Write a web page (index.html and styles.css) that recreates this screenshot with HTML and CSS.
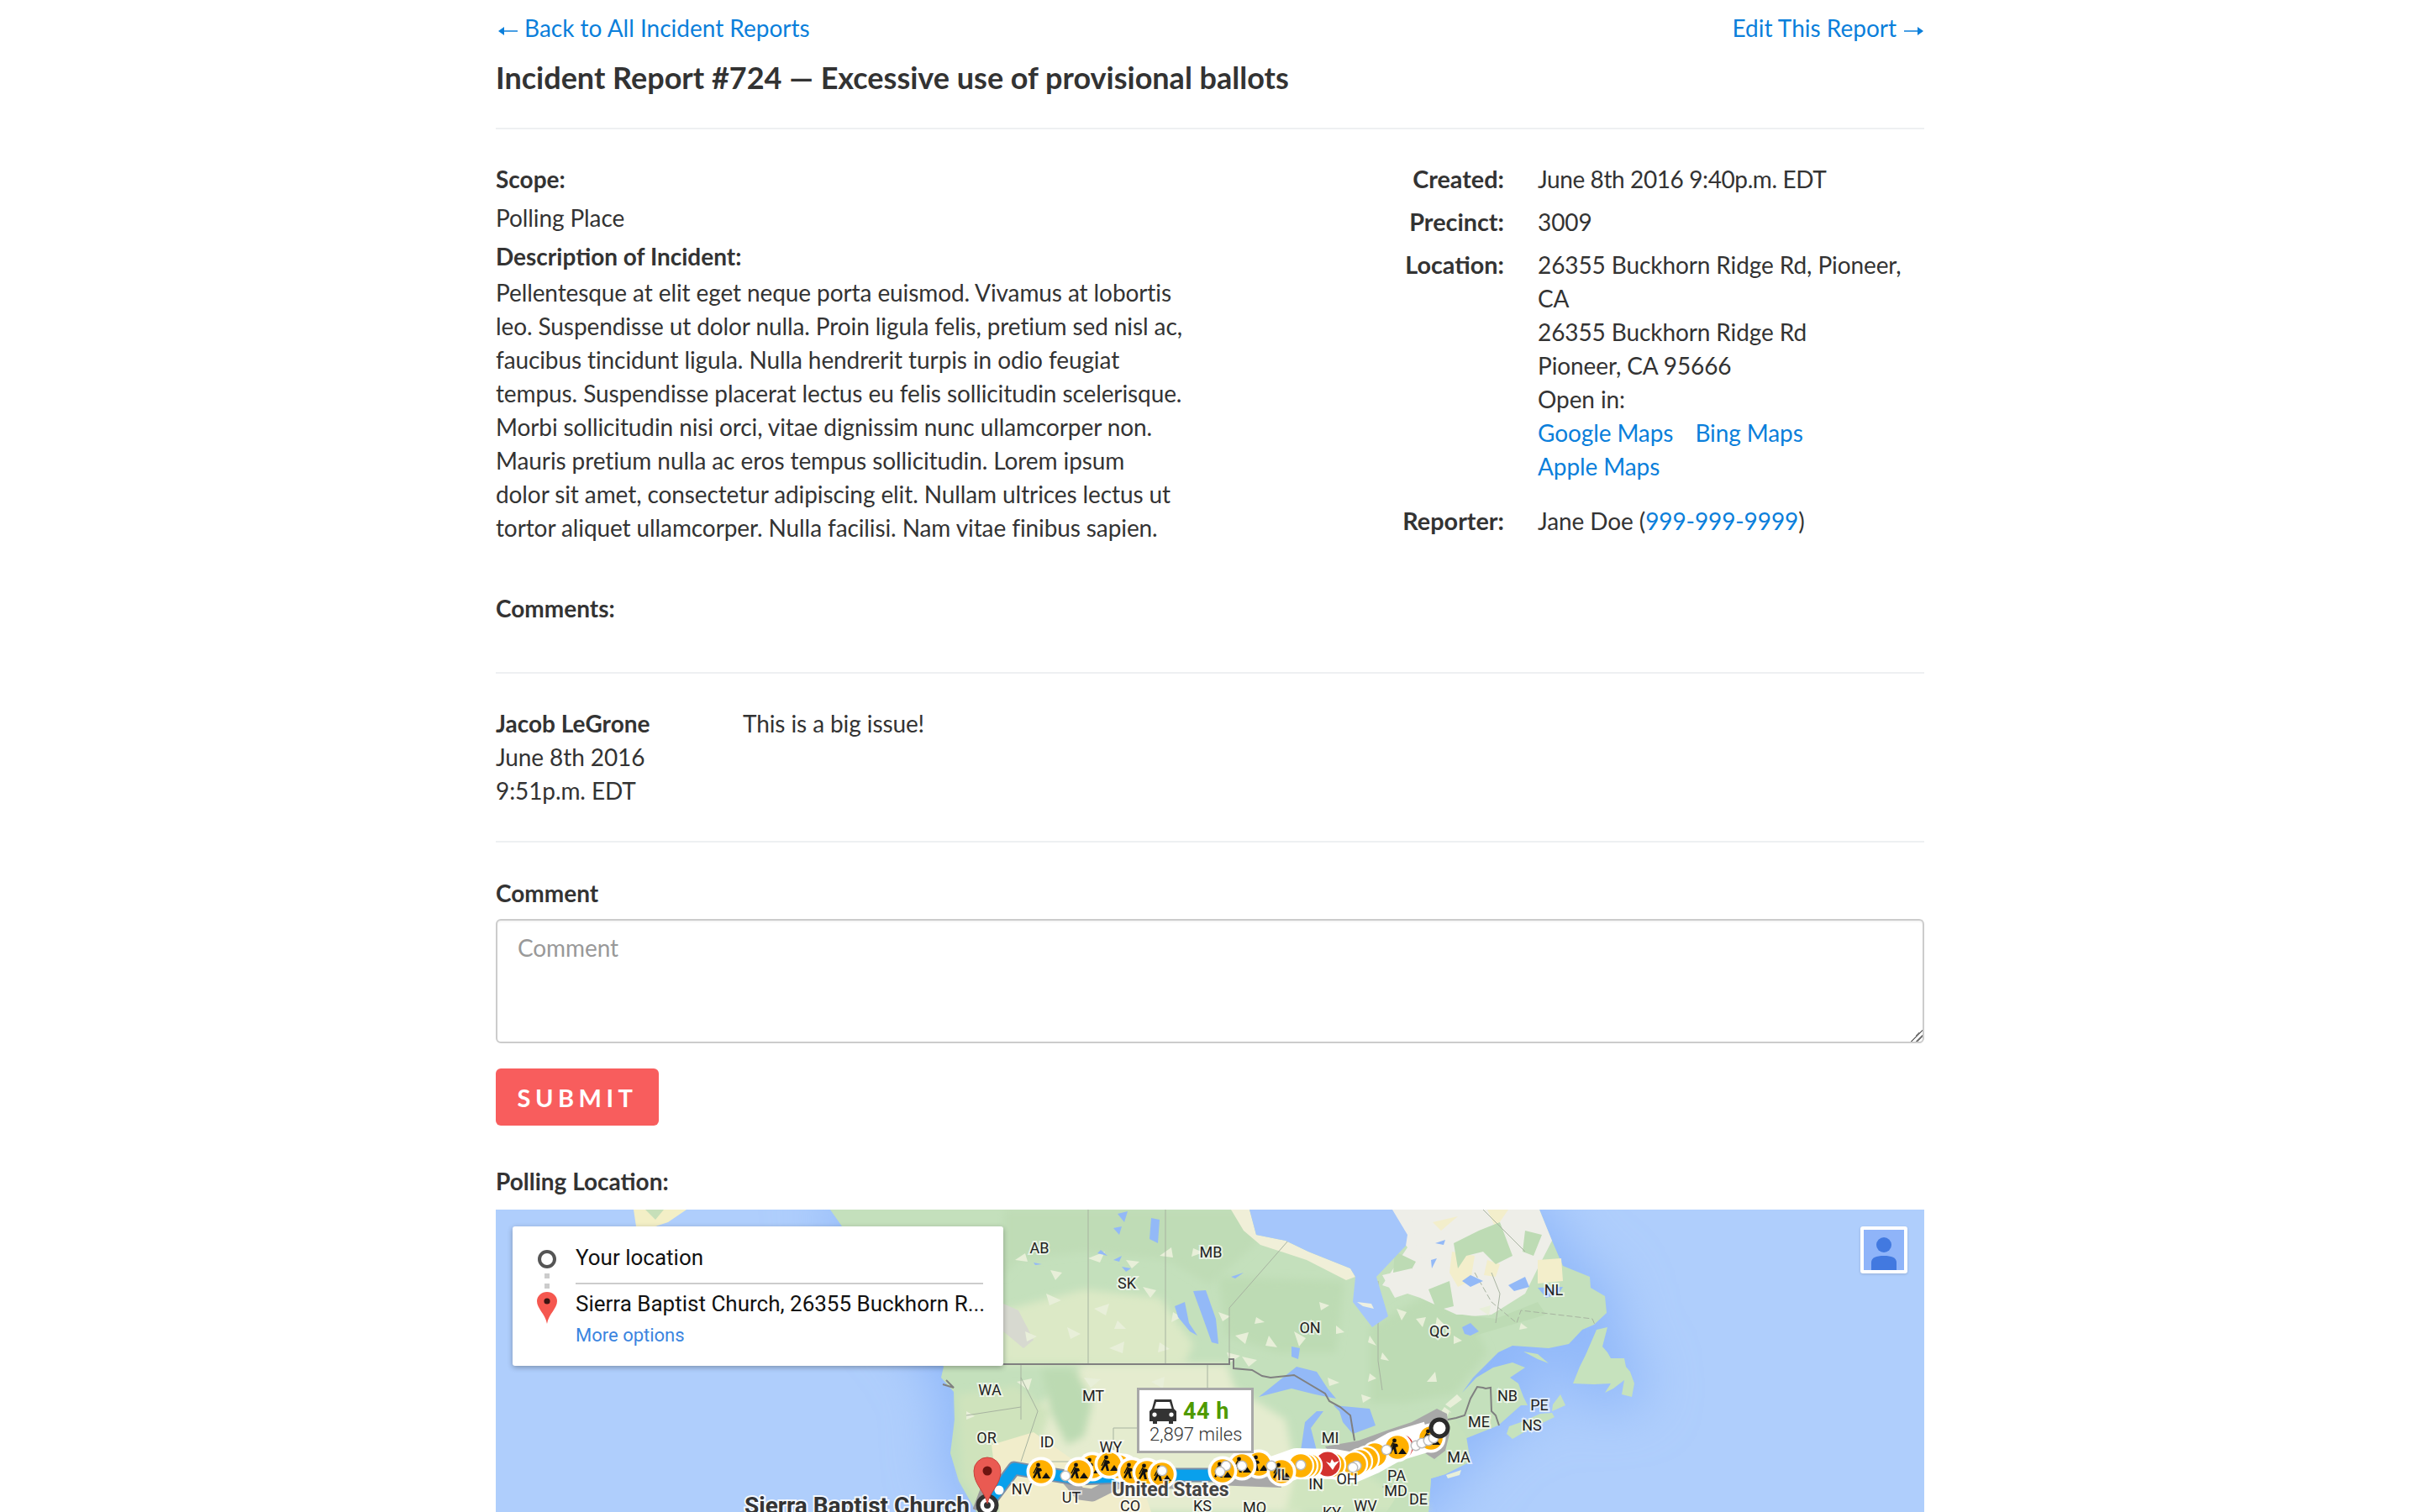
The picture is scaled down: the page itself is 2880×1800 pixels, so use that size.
FILE: index.html
```html
<!DOCTYPE html>
<html lang="en">
<head>
<meta charset="utf-8">
<title>Incident Report #724</title>
<link rel="stylesheet" href="styles.css">
</head>
<body>
<main class="page">
  <nav class="top-links">
    <a href="#"><svg class="arrow arrow-left" viewBox="0 0 23 12" width="23" height="12"><path d="M23 5.200H7V1L0 6L7 11V6.800H23Z" fill="#0b7fdb"/></svg>Back to All Incident Reports</a>
    <a href="#">Edit This Report<svg class="arrow arrow-right" viewBox="0 0 23 12" width="23" height="12"><path d="M0 5.200H16V1L23 6L16 11V6.800H0Z" fill="#0b7fdb"/></svg></a>
  </nav>
  <h1 class="title">Incident Report #724 — Excessive use of provisional ballots</h1>
  <hr class="rule rule-head">

  <section class="report">
    <div class="report-main">
      <h2 class="label">Scope:</h2>
      <p class="scope">Polling Place</p>
      <h2 class="label">Description of Incident:</h2>
      <p class="description">Pellentesque at elit eget neque porta euismod. Vivamus at lobortis leo. Suspendisse ut dolor nulla. Proin ligula felis, pretium sed nisl ac, faucibus tincidunt ligula. Nulla hendrerit turpis in odio feugiat tempus. Suspendisse placerat lectus eu felis sollicitudin scelerisque. Morbi sollicitudin nisi orci, vitae dignissim nunc ullamcorper non. Mauris pretium nulla ac eros tempus sollicitudin. Lorem ipsum dolor sit amet, consectetur adipiscing elit. Nullam ultrices lectus ut tortor aliquet ullamcorper. Nulla facilisi. Nam vitae finibus sapien.</p>
    </div>
    <dl class="facts">
      <dt>Created:</dt>
      <dd class="tight">June 8th 2016 9:40p.m. EDT</dd>
      <dt>Precinct:</dt>
      <dd>3009</dd>
      <dt>Location:</dt>
      <dd class="location">
        26355 Buckhorn Ridge Rd, Pioneer, CA<br>
        26355 Buckhorn Ridge Rd<br>
        Pioneer, CA 95666<br>
        Open in:<br>
        <a href="#" class="map-link">Google Maps</a> <a href="#" class="map-link">Bing Maps</a> <a href="#" class="map-link">Apple Maps</a>
      </dd>
      <dt>Reporter:</dt>
      <dd>Jane Doe (<a href="#">999-999-9999</a>)</dd>
    </dl>
  </section>

  <h2 class="label comments-title">Comments:</h2>
  <hr class="rule">
  <article class="comment">
    <div class="comment-meta"><strong>Jacob LeGrone</strong><br>June 8th 2016<br>9:51p.m. EDT</div>
    <p class="comment-body">This is a big issue!</p>
  </article>
  <hr class="rule">

  <form class="comment-form">
    <label class="label" for="comment">Comment</label>
    <textarea id="comment" class="comment-input" placeholder="Comment"></textarea>
    <button type="button" class="submit">SUBMIT</button>
  </form>

  <h2 class="label polling-title">Polling Location:</h2>
  <div class="map">
    <svg class="map-art" viewBox="0 0 1700 360" width="1700" height="360" xmlns="http://www.w3.org/2000/svg">
      <defs>
        <filter id="coastblur" x="-20%" y="-20%" width="140%" height="140%"><feGaussianBlur stdDeviation="32"/></filter>
        <filter id="soft" x="-10%" y="-10%" width="120%" height="120%"><feGaussianBlur stdDeviation="5"/></filter>
        <path id="landshape" d="M398 0L440 60L480 120L533 187L530 200L545 217L546 250L541 290L551 323L572 360L1110 360L1113 320L1130 315L1157 300L1153 273L1193 257L1220 233L1228 233L1223 223L1217 207L1207 200L1225 188L1210 182L1187 188L1167 200L1150 218L1163 200L1193 170L1210 162L1253 165L1277 160L1293 143L1307 137L1322 123L1320 103L1303 93L1302 80L1270 67L1257 37L1242 0Z"/>
        <path id="nfld" d="M1282 207L1290 187L1297 173L1310 143L1323 140L1317 163L1323 170L1327 177L1343 177L1345 187L1350 193L1355 207L1352 223L1340 220L1343 203L1330 213L1320 218L1327 207L1307 208Z"/>
        <path id="ns" d="M1203 267L1210 273L1227 263L1260 247L1257 242L1243 243L1223 252L1206 258ZM1257 240L1273 233L1267 220L1258 232ZM1223 169L1240 172L1253 183L1240 178Z"/>
        <g id="worker">
          <circle cx="-3.500" cy="-8" r="2.400" fill="#111"/>
          <path d="M-5-5L0-4L1-1L-2 0L0 8L-3 8L-4.500 2L-8 8L-10 7L-6.500 0Z" fill="#111"/>
          <path d="M-9 2L-5-6" stroke="#111" stroke-width="1.400"/>
          <path d="M1 8L6 1L11 8Z" fill="#111"/>
        </g>
        <g id="marker">
          <circle r="17.500" fill="#fff"/>
          <circle r="13.800" fill="#ffb000"/>
          <use href="#worker"/>
        </g>
        <g id="ring">
          <circle r="16.200" fill="#fff"/>
          <circle r="13.800" fill="#ffb000"/>
        </g>
        <g id="dot">
          <circle r="6.500" fill="#bbb"/>
          <circle r="5" fill="#fff"/>
        </g>
      </defs>

      <rect width="1700" height="360" fill="#afcefc"/>
      <g filter="url(#coastblur)" fill="#8fb7f9" stroke="#8fb7f9" stroke-width="24">
        <use href="#landshape"/>
        <use href="#nfld"/>
      </g>

      <path d="M164 0L227 0L205 15L190 20L167 20Z" fill="#f3efc6"/>
      <path d="M178 0L200 0L190 12Z" fill="#c6dfb9"/>
      <use href="#landshape" fill="#c4e0bc"/>
      <use href="#nfld" fill="#c6e2bd"/>
      <use href="#ns" fill="#c6e2bd"/>

      <!-- prairie and plains -->
      <path d="M604 120L700 95L790 105L830 160L820 184L604 184Z" fill="#dce9c6" filter="url(#soft)"/>
      <path d="M700 184L870 184L880 215L900 225L940 250L950 300L960 360L590 360L600 300L640 240Z" fill="#e5eccf" filter="url(#soft)"/>
      <path d="M550 220L620 210L660 240L640 300L680 360L580 360L555 320Z" fill="#cfe3bc" filter="url(#soft)"/>
      <path d="M590 280L640 265L690 300L760 300L780 360L600 360Z" fill="#f1edcb"/>
      <path d="M650 190L690 190L710 230L700 270L680 280L660 240Z" fill="#bcdab2" filter="url(#soft)"/>
      <path d="M1000 290L1060 330L1090 320L1110 360L940 360L950 320Z" fill="#d0e5bf" filter="url(#soft)"/>
      <path d="M604 0L900 0L905 40L850 90L800 60L700 50L620 60L604 80Z" fill="#bfdcb6" filter="url(#soft)"/>
      <path d="M860 80L1010 85L1000 170L930 170L870 150Z" fill="#bddbb4" filter="url(#soft)"/>
      <path d="M1040 140L1110 100L1160 130L1180 170L1140 220L1080 230L1040 230Z" fill="#bddbb4" filter="url(#soft)"/>
      <!-- Quebec and Labrador -->
      <path d="M1050 0L1242 0L1257 37L1240 70L1225 100L1185 125L1150 128L1100 105L1055 90L1085 45Z" fill="#eeeee8"/>
      <path d="M1138 50L1165 55L1160 85L1145 92L1135 75ZM1180 60L1195 65L1190 80L1176 78ZM1240 60L1268 58L1270 85L1240 88ZM1115 15L1145 8L1125 25ZM1180 0L1205 0L1190 22Z" fill="#f3eecb"/>
      <path d="M1140 40L1170 25L1195 15L1210 55L1190 65L1175 50L1155 55L1145 70ZM1105 125L1150 125L1190 130L1240 110L1250 125L1165 150L1120 150ZM1225 25L1245 30L1235 55L1222 50ZM1110 95L1135 85L1140 115L1120 120ZM1070 50L1095 62L1085 80L1068 75Z" fill="#bddbb4"/>
      <path d="M875 0L897 0L905 30L940 37L967 50L1017 70L1023 80L1012 84L965 60L910 42L890 25Z" fill="#f0efd8"/>
      <path d="M1055 78L1090 70L1100 95L1070 105Z" fill="#eeeee8"/>
      <path d="M1090 10L1115 0L1115 60L1098 55Z" fill="#eeeee8"/>

      <!-- Rocky mountains -->
      <path d="M604 112L622 120L640 155L628 165L604 145Z" fill="#d7d9d0"/>

      <!-- white flecks -->
      <path fill="#e8efd9" d="M618 60l12-8 3 10zM660 72l14 3-8 9zM705 58l20-8-6 13zM750 60l16 2-9 8zM790 55l14-10 2 12zM830 46l12 5-14 5zM655 100l18 8-14 6zM712 118l18-6-4 14zM770 92l16 4-7 9zM806 122l10 6-12 6zM860 122l14 5-9 6zM905 128l10 6-12 2zM880 150l16-4-4 14zM920 150l10 14-14-2zM950 145l14 8-8 10zM980 110l12 4-10 6zM870 170l16 4-12 8zM888 175l18 4-10 8zM1000 138l10 8-10 2zM1040 150l8 12-10-4zM1072 118l12 4-6 10zM1095 130l12-2-4 12zM1120 128l10 10-12 2zM1040 195l8 6-10 4zM1055 170l8 10-10-2zM1108 205l10-12 2 12zM1140 150l10 6-10 4zM1170 118l14-4-2 12zM1220 135l8 6-10 2zM630 145l14 6-12 6zM680 140l16 8-12 6zM730 165l18-8-2 14zM790 158l12 8-14 4zM740 132l10 10-14 0zM620 205l18-4-4 14zM700 200l20 2-12 10zM780 205l16-6-2 14zM812 240l14-6-4 12zM560 240l10 6-10 4zM990 200l14 6-12 4zM1030 220l12 4-10 6zM1115 255l14-20 8 6-12 18zM1130 232l14-12 6 6-14 10zM1010 300l12 4-10 6zM1060 340l10-8 2 10zM1131 316l18-6-2 6-14 4z"/>

      <!-- state and province lines -->
      <g fill="none" stroke="#a7b3a0" stroke-width="1">
        <path d="M705 0V184M797 0V184"/>
        <path d="M873 117V178M873 117L943 37" />
        <path d="M1050 85V180L1055 215"/>
        <path d="M625 184V250M625 200L645 240L625 300M640 300H790M735 260V300M735 260H900M847 184V260M560 245L625 235"/>
        <path d="M1165 75L1185 110L1215 135L1220 120L1305 130L1308 137" stroke-dasharray="7 3"/>
        <path d="M1185 75L1195 100L1190 135"/>
        <path d="M1175 0L1225 50"/>
        <path d="M1055 330H1110M1130 270V310"/>
      </g>

      <!-- Hudson Bay -->
      <path d="M897 0L905 30L940 37L967 50L1017 70L1023 80L1020 110L1043 140L1062 127L1048 80L1083 43L1085 30L1067 0Z" fill="#a5c6fb"/>
      <path d="M1025 110L1042 112L1045 118L1032 115Z" fill="#eef0e2"/>

      <!-- lakes -->
      <g fill="#93b9f7">
        <path d="M908 223L933 203L953 187L977 193L990 213L1000 225L975 220L947 213Z"/>
        <path d="M977 240L963 253L958 287L977 287L970 260L985 240Z"/>
        <path d="M997 233L1040 237L1047 257L1020 267L1008 253L1004 240Z"/>
        <path d="M830 97L845 96L857 130L860 160L852 158L842 130ZM808 115L820 110L825 135L835 150L826 145L812 128Z"/>
        <path d="M947 163L957 165L955 178L947 175ZM780 10L790 12L788 40L778 35ZM740 5L752 2L748 15ZM735 22L745 20L742 30ZM745 68L756 70L750 74ZM640 63L650 65L642 66ZM735 60L745 55L742 62ZM720 48L728 55L716 52ZM890 75L880 82L875 80ZM1160 78L1175 85L1160 92L1150 85ZM1205 90L1225 80L1230 92L1212 97ZM1150 140L1160 135L1170 145L1160 150L1153 148ZM1240 93L1270 92L1265 100L1250 105Z"/>
        <path d="M1118 40L1130 36L1128 42ZM1113 60L1120 58L1114 70Z"/>
      </g>
      <path d="M1023 290L1090 280L1120 300L1123 270L1135 240L1155 270L1160 300L1130 315L1113 320L1110 360L1060 360L1080 330Z" fill="#c6e1bb"/>

      <!-- country border -->
      <g fill="none" stroke="#808080" stroke-width="2">
        <path d="M600 184H873V178H878V189L900 191L912 198L922 200L950 197L987 219L992 228L1005 235L1017 245L1022 275"/>
        <path d="M536 203L545 212L532 208"/>
        <path d="M1133 250L1143 248L1153 245L1160 225L1168 211L1175 212L1178 213L1184 212L1185 240L1190 245L1194 257"/>
      </g>

      <!-- alternate routes -->
      <path d="M987 282L1027 275L1060 263L1090 253L1120 237L1132 243L1135 267L1130 287L1117 297L1103 288L1060 292L1000 300Z" fill="#a8a8a8"/>
      <path d="M680 320L695 338L710 340L740 325L810 325" fill="none" stroke="#a8a8a8" stroke-width="15" stroke-linejoin="round"/>
      <path d="M855 322L935 325" fill="none" stroke="#a8a8a8" stroke-width="12"/>

      <!-- main route -->
      <path d="M578 360L590 328" fill="none" stroke="#999" stroke-width="22"/>
      <path d="M583 353L617 308L640 312L690 320L800 316L870 316" fill="none" stroke="#7d8ea5" stroke-width="17" stroke-linejoin="round"/>
      <path d="M583 353L617 308L640 312L690 320L800 316L870 316" fill="none" stroke="#09a0ec" stroke-width="13" stroke-linejoin="round"/>
      <path d="M925 312L953 302L997 303L1020 307L1043 297L1070 282L1110 270" fill="none" stroke="#fff" stroke-width="36" stroke-linejoin="round"/>

      <!-- road work markers -->
      <use href="#marker" x="710" y="306"/>
      <use href="#marker" x="694" y="312"/>
      <use href="#marker" x="747" y="308"/>
      <use href="#ring" x="741" y="306"/>
      <use href="#marker" x="730" y="303"/>
      <use href="#marker" x="757" y="312"/>
      <use href="#marker" x="775" y="313"/>
      <use href="#marker" x="793" y="315"/>
      <use href="#marker" x="649" y="312"/>
      <use href="#marker" x="908" y="303"/>
      <use href="#marker" x="888" y="305"/>
      <use href="#marker" x="865" y="311"/>
      <use href="#dot" x="793" y="311"/>
      <use href="#dot" x="869" y="305"/>
      <use href="#dot" x="862" y="312"/>
      <use href="#dot" x="888" y="305"/>

      <use href="#marker" x="1113" y="272"/>
      <circle cx="1078" cy="282" r="14" fill="#d3322f"/>
      <use href="#marker" x="1073" y="283"/>
      <use href="#ring" x="1046" y="292"/>
      <use href="#ring" x="1036" y="297"/>
      <use href="#ring" x="1028" y="300"/>
      <use href="#ring" x="1022" y="303"/>
      <use href="#ring" x="996" y="304"/>
      <circle cx="990" cy="303" r="16.200" fill="#fff"/>
      <circle cx="990" cy="303" r="14.500" fill="#d3322f"/>
      <path d="M988 300l5 2 2-5 3 4 6-2-5 6-3 5-3-4z" fill="#fff"/>
      <use href="#ring" x="968" y="305"/>
      <use href="#ring" x="963" y="305"/>
      <use href="#ring" x="958" y="305"/>
      <use href="#marker" x="935" y="312"/>
      <use href="#dot" x="923" y="305"/>
      <use href="#dot" x="958" y="304"/>
      <use href="#dot" x="1024" y="305"/>
      <use href="#dot" x="1020" y="307"/>
      <use href="#dot" x="1060" y="286"/>
      <use href="#dot" x="1095" y="281"/>
      <use href="#dot" x="1102" y="278"/>
      <use href="#dot" x="1110" y="275"/>
      <use href="#dot" x="1116" y="272"/>
      <use href="#dot" x="678" y="317"/>
      <circle cx="599" cy="334" r="5.500" fill="#fff"/>

      <!-- end points -->
      <circle cx="1123" cy="260" r="10" fill="#fff" stroke="#2b2b2b" stroke-width="5"/>
      <circle cx="585" cy="352" r="11" fill="#fff" stroke="#333" stroke-width="5"/>
      <circle cx="585" cy="352" r="4" fill="#333"/>
      <path d="M585 350C582 335 569 328 569 311A16 16 0 0 1 601 311C601 328 588 335 585 350Z" fill="#ea5a52" stroke="#c8413b" stroke-width="1"/>
      <circle cx="585" cy="311" r="5.500" fill="#6d1410"/>

      <!-- map labels -->
      <g class="map-labels" text-anchor="middle">
        <text x="647" y="52">AB</text><text x="851" y="57">MB</text><text x="751" y="94">SK</text>
        <text x="969" y="147">ON</text><text x="1123" y="151">QC</text><text x="1259" y="102">NL</text>
        <text x="1204" y="228">NB</text><text x="1242" y="239">PE</text><text x="1233" y="263">NS</text>
        <text x="1170" y="259">ME</text><text x="1146" y="301">MA</text><text x="588" y="221">WA</text>
        <text x="711" y="228">MT</text><text x="584" y="278">OR</text><text x="656" y="283">ID</text>
        <text x="732" y="289">WY</text><text x="626" y="339">NV</text><text x="685" y="349">UT</text>
        <text x="755" y="359">CO</text><text x="841" y="359">KS</text><text x="903" y="361">MO</text>
        <text x="993" y="278">MI</text><text x="937" y="322">IL</text><text x="976" y="333">IN</text>
        <text x="1013" y="327">OH</text><text x="1072" y="323">PA</text><text x="1071" y="341">MD</text>
        <text x="1098" y="351">DE</text><text x="1035" y="359">WV</text><text x="995" y="367">KY</text>
      </g>
      <text class="map-country" x="803" y="341" text-anchor="middle">United States</text>
      <text class="map-place" x="430" y="362" text-anchor="middle">Sierra Baptist Church</text>
    </svg>

    <div class="directions">
      <div class="dir-icons">
        <span class="dir-origin"></span>
        <span class="dir-dot"></span>
        <span class="dir-dot"></span>
        <svg class="dir-pin" viewBox="0 0 24 38" width="24" height="38"><path d="M12 38C10 26 0 20 0 11A12 11 0 0 1 24 11C24 20 14 26 12 38Z" fill="#f5574f"/><circle cx="12" cy="11" r="3.600" fill="#3a1512"/></svg>
      </div>
      <div class="dir-text">
        <div class="dir-from">Your location</div>
        <div class="dir-to">Sierra Baptist Church, 26355 Buckhorn R...</div>
        <a href="#" class="dir-more">More options</a>
      </div>
    </div>

    <div class="trip">
      <div class="trip-top">
        <svg class="trip-car" viewBox="0 0 32 29" width="32" height="29"><path d="M6 0H26L29 11L32 14V26H28V29H23V26H9V29H4V26H0V14L3 11ZM8 3L5.500 11H26.500L24 3ZM6 15.500A2.600 2.600 0 1 0 6 20.700A2.600 2.600 0 1 0 6 15.500ZM26 15.500A2.600 2.600 0 1 0 26 20.700A2.600 2.600 0 1 0 26 15.500Z" fill="#333" fill-rule="evenodd"/></svg>
        <span class="trip-time">44 h</span>
      </div>
      <div class="trip-dist">2,897 miles</div>
    </div>

    <div class="pegman">
      <svg viewBox="0 0 48 48" width="48" height="48"><rect width="48" height="48" fill="#8fb4f9"/><ellipse cx="24" cy="18" rx="9" ry="9" fill="#4279e0"/><path d="M9 48V39C9 33 15 31 24 31C33 31 39 33 39 39V48Z" fill="#4279e0"/></svg>
    </div>
  </div>
</main>
</body>
</html>
```

FILE: styles.css
```css
* { box-sizing: border-box; }

html, body {
  margin: 0;
  padding: 0;
  background: #fff;
}

body {
  font-family: Lato, "Liberation Sans", sans-serif;
  font-size: 28px;
  line-height: 40px;
  letter-spacing: -0.1px;
  color: #333;
}

a { color: #0b7fdb; text-decoration: none; }

.page {
  width: 1700px;
  margin: 0 auto;
  padding-top: 13px;
}

.top-links {
  display: flex;
  justify-content: space-between;
  letter-spacing: 0;
}

.arrow { display: inline-block; vertical-align: 1px; }

.arrow-left { margin: 0 8px 0 3px; }

.arrow-right { margin: 0 1px 0 9px; }

.title {
  margin: 14px 0 0;
  font-size: 36px;
  line-height: 50px;
  font-weight: 700;
  letter-spacing: 0;
}

.rule {
  height: 2px;
  margin: 0;
  border: 0;
  background: #eef0f2;
}

.rule-head { margin-top: 35px; }

.report {
  display: flex;
  justify-content: space-between;
  align-items: flex-start;
  margin-top: 39px;
}

.report-main { width: 818px; }

.label {
  display: block;
  margin: 0;
  font-size: 28px;
  line-height: 40px;
  font-weight: 700;
  letter-spacing: 0;
}

.scope { margin: 6px 0 6px; }

.description { margin: 3px 0 0; }

.facts {
  display: grid;
  grid-template-columns: 200px 460px;
  column-gap: 40px;
  row-gap: 11px;
  width: 700px;
  margin: 0;
  flex: none;
}

.facts dt {
  font-size: 28.800px;
  font-weight: 700;
  letter-spacing: 0;
  text-align: right;
}

.facts dd { margin: 0; }

.facts .tight { letter-spacing: -0.4px; }

.location { padding-bottom: 14px; }

.map-link { display: inline-block; margin-right: 19px; }

.comments-title { margin-top: 56px; }

.comments-title + .rule { margin-top: 56px; }

.comment {
  display: grid;
  grid-template-columns: 294px 1fr;
  padding: 39px 0 40px;
}

.comment-meta strong { font-weight: 700; letter-spacing: 0; }

.comment-body { margin: 0; }

.comment-form { margin-top: 40px; }

.comment-input {
  display: block;
  width: 100%;
  height: 148px;
  margin-top: 11px;
  padding: 12px 24px;
  border: 2px solid #ccc;
  border-radius: 6px;
  font: inherit;
  letter-spacing: inherit;
  color: #333;
  box-shadow: inset 0 2px 2px rgba(0, 0, 0, 0.04);
}

.comment-input::placeholder { color: #999; opacity: 1; }

.comment-input::-webkit-resizer {
  background: linear-gradient(135deg, transparent 0 50%, #777 50% 59%, transparent 59% 72%, #777 72% 81%, transparent 81%);
}

.submit {
  display: block;
  width: 194px;
  height: 68px;
  margin-top: 30px;
  padding: 0;
  border: 0;
  border-radius: 6px;
  background: #f85d5d;
  color: #fff;
  font-family: Lato, sans-serif;
  font-size: 29px;
  font-weight: 700;
  letter-spacing: 5.500px;
}

.polling-title { margin-top: 46px; }

.map {
  position: relative;
  width: 1700px;
  height: 360px;
  margin-top: 14px;
  overflow: hidden;
  letter-spacing: 0;
}

.map-art { display: block; }

.map-labels text {
  font-family: Roboto, sans-serif;
  font-size: 18px;
  fill: #222;
  stroke: rgba(255, 255, 255, 0.65);
  stroke-width: 4px;
  paint-order: stroke;
}

.map-country {
  font-family: Roboto, sans-serif;
  font-size: 23px;
  font-weight: 700;
  fill: #444;
  stroke: rgba(255, 255, 255, 0.8);
  stroke-width: 4px;
  paint-order: stroke;
}

.map-place {
  font-family: Roboto, sans-serif;
  font-size: 28px;
  font-weight: 700;
  fill: #333;
  stroke: rgba(255, 255, 255, 0.85);
  stroke-width: 4px;
  paint-order: stroke;
}

.directions {
  position: absolute;
  left: 20px;
  top: 20px;
  display: flex;
  width: 584px;
  height: 166px;
  padding: 0 24px 0 0;
  background: #fff;
  border-radius: 3px;
  box-shadow: 0 2px 6px rgba(0, 0, 0, 0.3);
}

.dir-icons {
  display: flex;
  flex-direction: column;
  align-items: center;
  flex: none;
  width: 75px;
  padding: 28px 0 0 7px;
}

.dir-origin {
  width: 22px;
  height: 22px;
  border: 4px solid #555;
  border-radius: 50%;
}

.dir-dot {
  width: 6px;
  height: 6px;
  margin-top: 6px;
  background: #ccc;
}

.dir-pin { display: block; margin-top: 4px; }

.dir-text {
  flex: 1;
  min-width: 0;
  font-family: Roboto, sans-serif;
  font-size: 26px;
  color: #111;
}

.dir-from {
  height: 69px;
  padding-top: 17px;
  line-height: 40px;
  border-bottom: 2px solid #ccc;
}

.dir-to {
  height: 46px;
  padding-top: 3px;
  line-height: 40px;
  white-space: nowrap;
}

.dir-more {
  display: block;
  font-size: 22px;
  line-height: 30px;
  color: #3a84df;
}

.trip {
  position: absolute;
  left: 763px;
  top: 212px;
  width: 139px;
  height: 78px;
  padding: 10px 0 0 12px;
  background: #fff;
  border: 3px solid #a8a8a8;
  font-family: Roboto, sans-serif;
  color: #333;
}

.trip-top {
  display: flex;
  align-items: center;
  gap: 8px;
  height: 30px;
}

.trip-time {
  font-size: 27px;
  font-weight: 700;
  letter-spacing: 0.5px;
  line-height: 30px;
  color: #4f9a00;
  white-space: nowrap;
}

.trip-dist {
  font-size: 22px;
  font-weight: 300;
  line-height: 26px;
  white-space: nowrap;
}

.pegman {
  position: absolute;
  left: 1624px;
  top: 20px;
  width: 56px;
  height: 56px;
  padding: 4px;
  background: #fff;
  border-radius: 3px;
  box-shadow: 0 1px 3px rgba(0, 0, 0, 0.15);
}

.pegman svg { display: block; }
```
